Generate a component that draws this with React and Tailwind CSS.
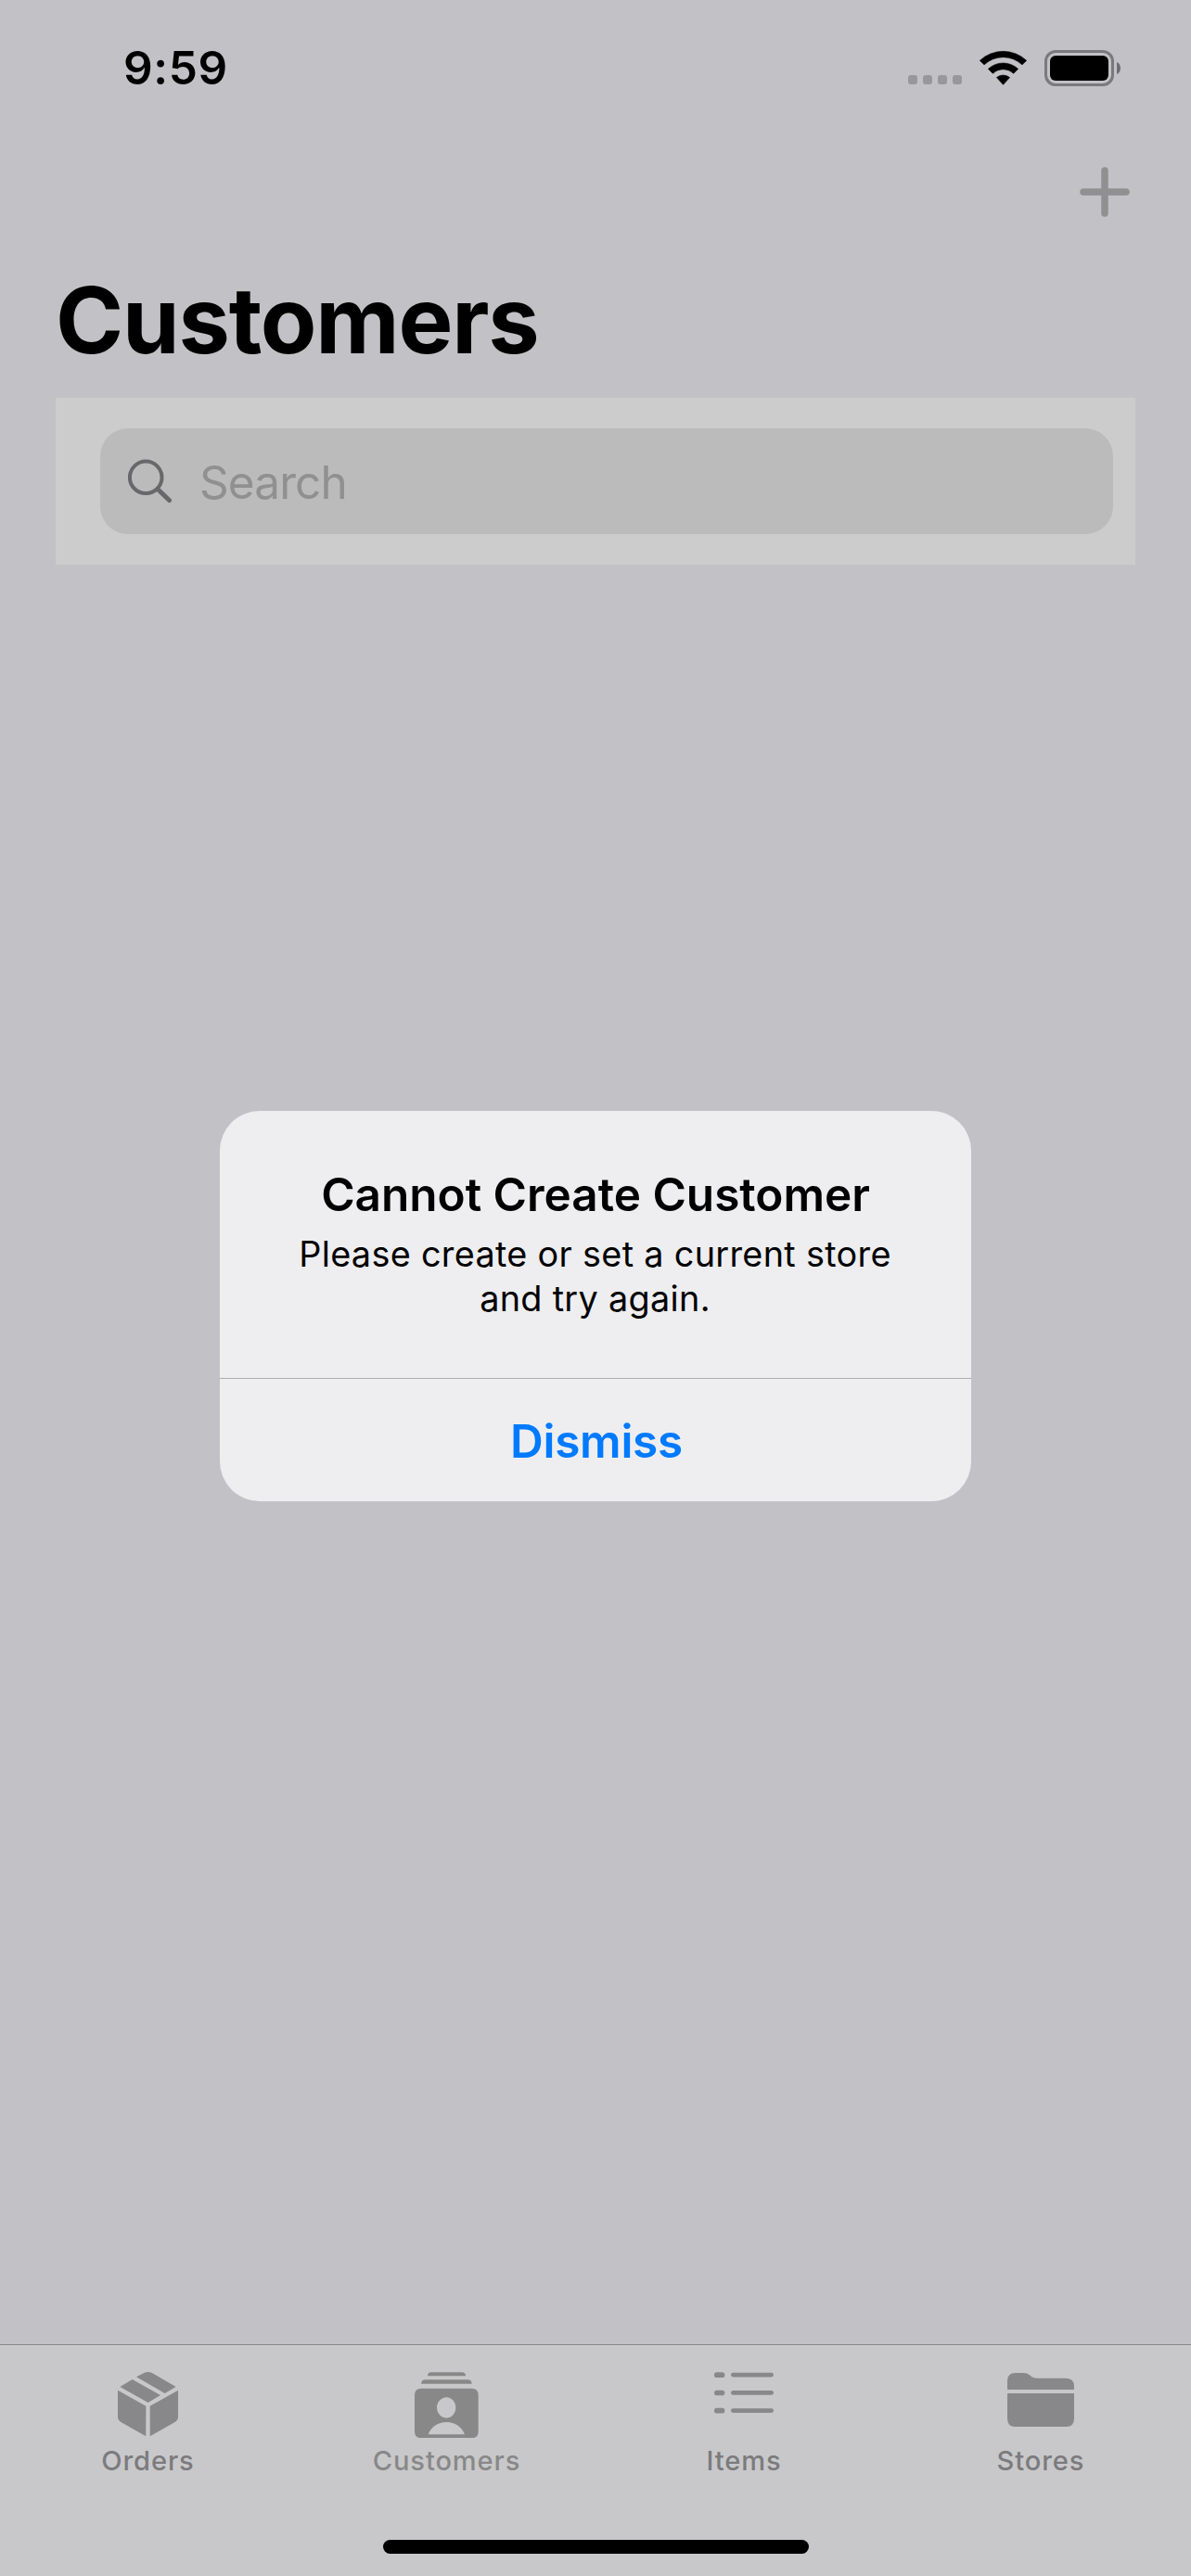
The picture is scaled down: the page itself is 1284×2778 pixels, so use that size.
import React from "react";

function WifiIcon() {
  return (
    <svg className="h-[38px] w-[51px]" viewBox="288 71 152 113" fill="black" stroke="black" strokeWidth="2" strokeLinejoin="round">
      <path d="M289 104.500A110 110 0 0 1 439 104.500L425 118A88.500 88.500 0 0 0 303 118Z" />
      <path d="M316 131.500A70.500 70.500 0 0 1 412 131.500L397.500 146A48.500 48.500 0 0 0 330.500 146Z" />
      <path d="M343 159A33 33 0 0 1 385 159L364 182Z" />
    </svg>
  );
}

function BatteryIcon() {
  return (
    <div className="flex items-center gap-[3px]">
      <div className="h-[39px] w-[75px] rounded-[12px] border-[3px] border-[#7a7a7c] p-[3px]">
        <div className="h-full w-full rounded-[6px] bg-black" />
      </div>
      <svg className="h-[13px] w-[4px]" viewBox="0 0 4 13" fill="#6e6e70">
        <path d="M0 0C5.300 2 5.300 11 0 13Z" />
      </svg>
    </div>
  );
}

function OrdersIcon() {
  return (
    <svg className="h-[69.333px] w-[65px]" viewBox="141 143 195 208" fill="#88888a">
      <path d="M201 159L226 146Q239 140 252 146L329 191L293 212Z" />
      <path d="M188 167L279 218L239 242L148 191Z" />
      <path d="M141 202L232 253V351L151 305Q141 299 141 288Z" />
      <path d="M336 202L245 253V351L326 305Q336 299 336 288Z" />
    </svg>
  );
}

function CustomersIcon() {
  return (
    <svg className="h-[71.333px] w-[69px]" viewBox="201 143 207 214" fill="#888888">
      <path d="M243 156Q243 144 255 144H354Q366 144 366 156Z" />
      <path d="M222 181Q223 168 236 168H372Q385 168 386 181Z" />
      <path
        fillRule="evenodd"
        d="M223 196H385Q407 196 407 218V335Q407 357 385 357H223Q201 357 201 335V218Q201 196 223 196ZM304 225C287 225 273 240 273 258C273 277 287 292 304 292C321 292 334 277 334 258C334 240 321 225 304 225ZM245 345H363C354 320 330 305 304 305C278 305 254 320 245 345Z"
      />
    </svg>
  );
}

function ItemsIcon() {
  return (
    <svg className="h-[45px] w-[64px]" viewBox="150 145 192 135" fill="#88888a">
      <rect x="150" y="146" width="34" height="17" rx="8.500" />
      <rect x="150" y="204" width="34" height="17" rx="8.500" />
      <rect x="150" y="261.500" width="34" height="17" rx="8.500" />
      <rect x="204" y="147" width="138" height="14.500" rx="7.250" />
      <rect x="204" y="205" width="138" height="14.500" rx="7.250" />
      <rect x="204" y="262.500" width="138" height="14.500" rx="7.250" />
    </svg>
  );
}

function StoresIcon() {
  return (
    <svg className="h-[58px] w-[72px]" viewBox="108 147 216 174" fill="#88888a">
      <path d="M108 201V173Q108 147 134 147H160Q172 147 180 154L187 160Q193 164 204 164H298Q324 165 324 190V201Z" />
      <path d="M108 213H324V294Q324 321 299 321H133Q108 321 108 294Z" />
    </svg>
  );
}

const tabs = [
  { label: "Orders", Icon: OrdersIcon, cell: "pr-[2px]", pad: "pt-[29px]", color: "text-[#7b7b7d]" },
  { label: "Customers", Icon: CustomersIcon, cell: "pr-0", pad: "pt-[29px]", color: "text-[#888888]" },
  { label: "Items", Icon: ItemsIcon, cell: "pr-px", pad: "pt-[29px]", color: "text-[#7b7b7d]" },
  { label: "Stores", Icon: StoresIcon, cell: "pr-[3px]", pad: "pt-[30px]", color: "text-[#7b7b7d]" },
];

function StatusBar() {
  return (
    <header className="flex h-[146px] items-center justify-between pr-[76px] pl-[133px]">
      <span className="text-[49.5px] leading-[60px] font-semibold tracking-[0.64px]">9:59</span>
      <div className="flex items-center">
        <div className="mt-[26px] mr-[19px] flex gap-[6px]">
          <i className="size-[10px] rounded-[3px] bg-[#98989a]" />
          <i className="size-[10px] rounded-[3px] bg-[#98989a]" />
          <i className="size-[10px] rounded-[3px] bg-[#98989a]" />
          <i className="size-[10px] rounded-[3px] bg-[#98989a]" />
        </div>
        <div className="mr-[19px]">
          <WifiIcon />
        </div>
        <BatteryIcon />
      </div>
    </header>
  );
}

function TabBar() {
  return (
    <nav className="flex h-[250px] flex-col justify-between border-t border-[#87878a] bg-[#c8c8ca] pb-[24px]">
      <ul className="grid grid-cols-4">
        {tabs.map(({ label, Icon, cell, pad, color }) => (
          <li key={label} className={"flex flex-col items-center " + cell}>
            <div className={"flex h-[107px] items-start " + pad}>
              <Icon />
            </div>
            <span className={"text-[29.1px] leading-[36px] font-medium tracking-[0.9px] " + color}>{label}</span>
          </li>
        ))}
      </ul>
      <div className="mx-auto h-[15px] w-[459px] rounded-full bg-black" />
    </nav>
  );
}

function Alert() {
  return (
    <div className="absolute inset-0 flex items-center justify-center pt-[39px]">
      <section role="alertdialog" className="flex h-[421px] w-[810px] flex-col overflow-hidden rounded-[43px] bg-[#eeeef0] text-center">
        <div className="h-[288px] pt-[60px]">
          <h2 className="text-[49.5px] leading-[60px] font-semibold tracking-[-0.02px]">Cannot Create Customer</h2>
          <p className="mt-[10px] pr-px text-[37.8px] leading-[48px] tracking-[0.31px]">
            Please create or set a current store
            <br />
            and try again.
          </p>
        </div>
        <button className="h-[133px] border-t border-[#adadb0] pt-[2px] pl-[2px] text-[49.5px] leading-[60px] font-semibold tracking-[-0.27px] text-[#007aff]">
          Dismiss
        </button>
      </section>
    </div>
  );
}

export default function App() {
  return (
    <div className="relative flex h-[2778px] w-[1284px] flex-col overflow-hidden bg-[#c2c1c6] font-['Inter',sans-serif] text-black">
      <StatusBar />
      <div className="flex h-[136px] justify-end pt-[34px] pr-[66px]">
        <svg className="size-[54px]" viewBox="0 0 54 54" stroke="#909092" strokeWidth="7.500" strokeLinecap="round">
          <path d="M27 4V50M4 27H50" />
        </svg>
      </div>
      <main className="flex-1 px-[60px]">
        <h1 className="h-[147px] pt-[3px] text-[99px] leading-[120px] font-bold tracking-[-1.2px]">Customers</h1>
        <div className="h-[180px] bg-[#cccccc] py-[33px] pr-[24px] pl-[48px]">
          <div className="flex h-[114px] items-center rounded-[30px] bg-[#bbbbbb] pl-[30px]">
            <svg className="h-[48px] w-[48px]" viewBox="0 0 48 48" fill="none" stroke="#68686a" strokeLinecap="round">
              <circle cx="19.200" cy="19.800" r="17.300" strokeWidth="4" />
              <path d="M32 32.500L44.500 44.500" strokeWidth="5" />
            </svg>
            <span className="mt-[2px] ml-[29px] text-[49.5px] leading-[60px] tracking-[-0.9px] text-[#909090]">Search</span>
          </div>
        </div>
      </main>
      <TabBar />
      <Alert />
    </div>
  );
}
